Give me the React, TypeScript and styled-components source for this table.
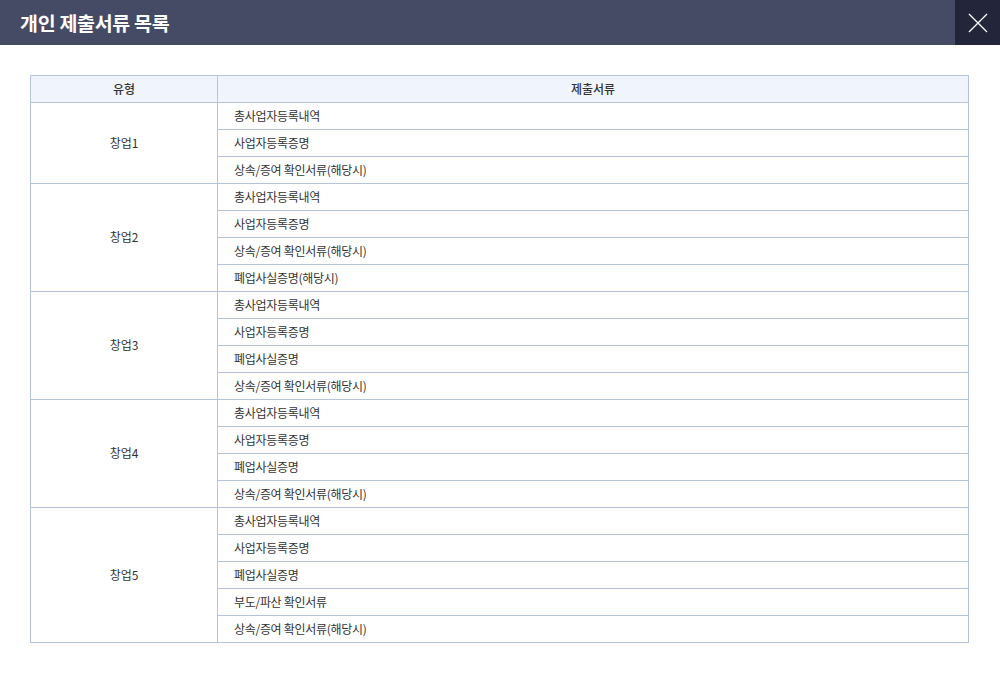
import React from "react";
import styled, { createGlobalStyle } from "styled-components";

const Global = createGlobalStyle`
  html, body { margin: 0; padding: 0; background: #fff; }
  body { font-family: "Noto Sans CJK KR", "Noto Sans", sans-serif; }
`;

const Modal = styled.div`
  width: 1000px;
  height: 673px;
  background: #fff;
  display: flex;
  flex-direction: column;
`;

const Header = styled.div`
  height: 45px;
  background: #454a65;
  display: flex;
  align-items: center;
  justify-content: space-between;
`;

const Title = styled.h1`
  margin: 0 0 1px 20px;
  font-size: 19.5px;
  font-weight: 700;
  color: #fff;
  letter-spacing: -0.3px;
`;

const CloseButton = styled.button`
  width: 45px;
  height: 45px;
  border: 0;
  padding: 0;
  background: #23263a;
  display: flex;
  align-items: center;
  justify-content: center;
  cursor: pointer;
`;

const Body = styled.div`
  padding: 30px 31px 0 30px;
`;

const Table = styled.table`
  width: 100%;
  border-collapse: collapse;
  table-layout: fixed;
  font-size: 12px;
  color: #333;
`;

const Th = styled.th`
  height: 24px;
  padding: 0 0 2px;
  background: #f0f5fd;
  border: 1px solid #b6c3dc;
  font-weight: 500;
  color: #333;
  text-align: center;
`;

const TypeCell = styled.td`
  border: 1px solid #b6c3dc;
  text-align: center;
  padding: 0 0 2px;
  color: #333;
`;

const DocCell = styled.td`
  height: 24px;
  border: 1px solid #b6c3dc;
  padding: 0 0 2px 16px;
  color: #333;
  letter-spacing: -0.3px;
`;

const groups: { type: string; docs: string[] }[] = [
  { type: "창업1", docs: ["총사업자등록내역", "사업자등록증명", "상속/증여 확인서류(해당시)"] },
  { type: "창업2", docs: ["총사업자등록내역", "사업자등록증명", "상속/증여 확인서류(해당시)", "폐업사실증명(해당시)"] },
  { type: "창업3", docs: ["총사업자등록내역", "사업자등록증명", "폐업사실증명", "상속/증여 확인서류(해당시)"] },
  { type: "창업4", docs: ["총사업자등록내역", "사업자등록증명", "폐업사실증명", "상속/증여 확인서류(해당시)"] },
  { type: "창업5", docs: ["총사업자등록내역", "사업자등록증명", "폐업사실증명", "부도/파산 확인서류", "상속/증여 확인서류(해당시)"] },
];

export default function App() {
  return (
    <>
      <Global />
      <Modal>
        <Header>
          <Title>개인 제출서류 목록</Title>
          <CloseButton aria-label="닫기">
            <svg width="20" height="20" viewBox="0 0 20 20">
              <path d="M1 1 L19 19 M19 1 L1 19" stroke="#fff" strokeWidth="1.3" />
            </svg>
          </CloseButton>
        </Header>
        <Body>
          <Table>
            <colgroup>
              <col style={{ width: 187 }} />
              <col />
            </colgroup>
            <thead>
              <tr>
                <Th>유형</Th>
                <Th>제출서류</Th>
              </tr>
            </thead>
            <tbody>
              {groups.map((g) =>
                g.docs.map((d, i) => (
                  <tr key={g.type + i}>
                    {i === 0 && <TypeCell rowSpan={g.docs.length}>{g.type}</TypeCell>}
                    <DocCell>{d}</DocCell>
                  </tr>
                ))
              )}
            </tbody>
          </Table>
        </Body>
      </Modal>
    </>
  );
}
